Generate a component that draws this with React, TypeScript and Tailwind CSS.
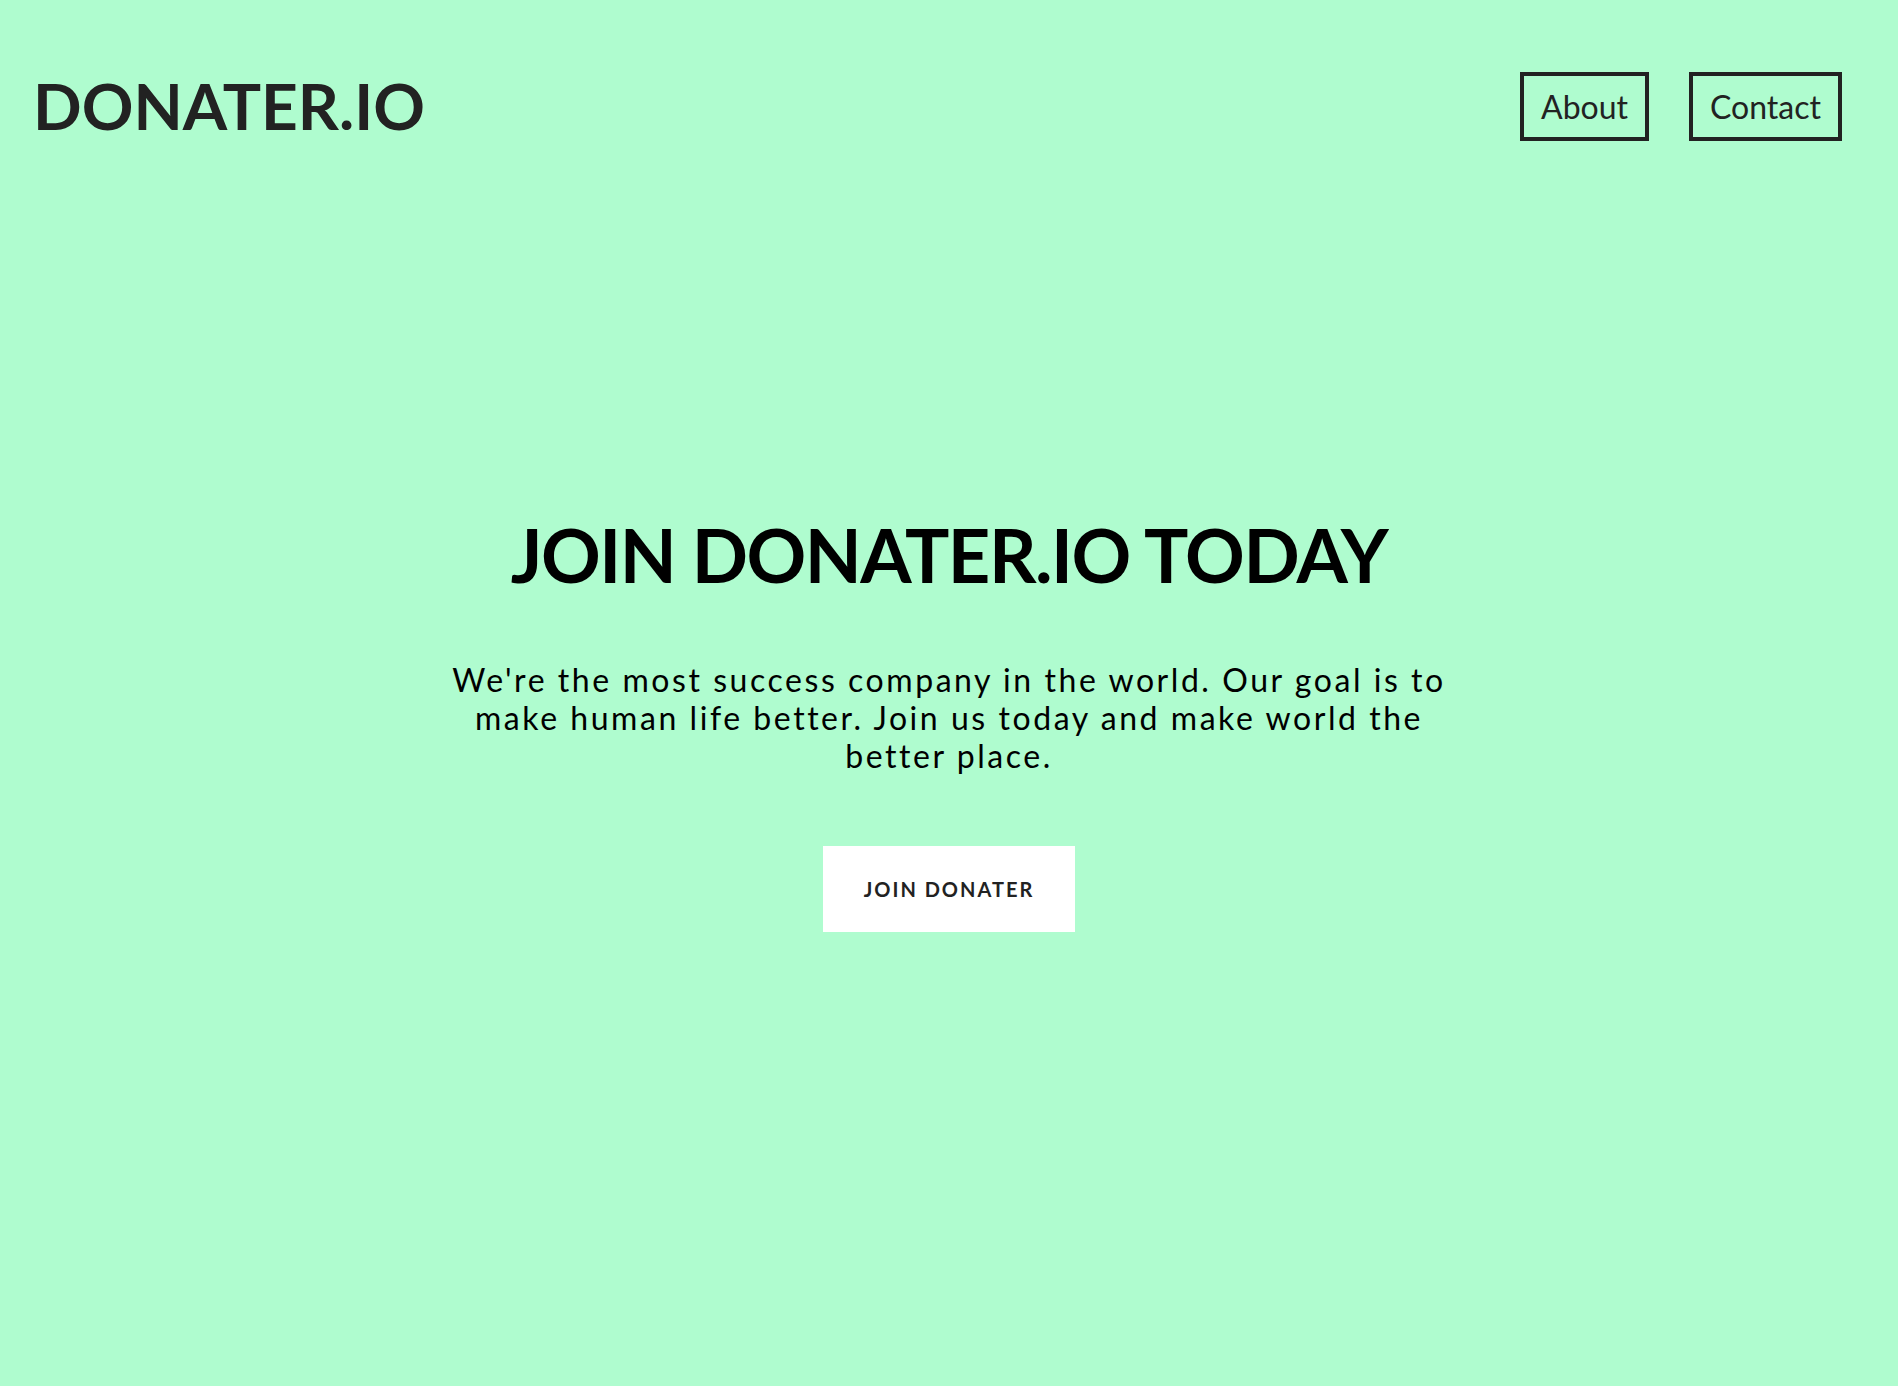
import React from "react";

export default function App() {
  return (
    <div
      className="min-h-[1386px] w-full bg-[#affccf] flex flex-col"
      style={{ fontFamily: "Lato, 'Noto Sans', sans-serif" }}
    >
      <header className="flex items-center justify-between pl-[33px] pr-[56px] pt-[68px]">
        <div className="text-[64px] font-bold leading-[1.2] text-[#222]">DONATER.IO</div>
        <nav className="flex items-center gap-[40px]">
          <a className="border-4 border-[#222] px-[17px] pt-[12px] pb-[10px] text-[32px] leading-[1.2] text-[#222]">
            About
          </a>
          <a className="border-4 border-[#222] px-[17px] pt-[12px] pb-[10px] text-[32px] leading-[1.2] text-[#222]">
            Contact
          </a>
        </nav>
      </header>
      <main className="flex flex-col items-center pt-[366px] text-center">
        <h1 className="text-[74px] font-bold leading-[1.2] tracking-[-1.5px] text-black">JOIN DONATER.IO TODAY</h1>
        <p className="mt-[61px] max-w-[1030px] text-[32px] leading-[1.2] tracking-[2.55px] text-black">
          We're the most success company in the world. Our goal is to make human life better. Join us
          today and make world the better place.
        </p>
        <button className="mt-[70px] w-[252px] h-[86px] bg-white text-[20px] font-bold tracking-[2px] text-[#222]">
          JOIN DONATER
        </button>
      </main>
    </div>
  );
}
